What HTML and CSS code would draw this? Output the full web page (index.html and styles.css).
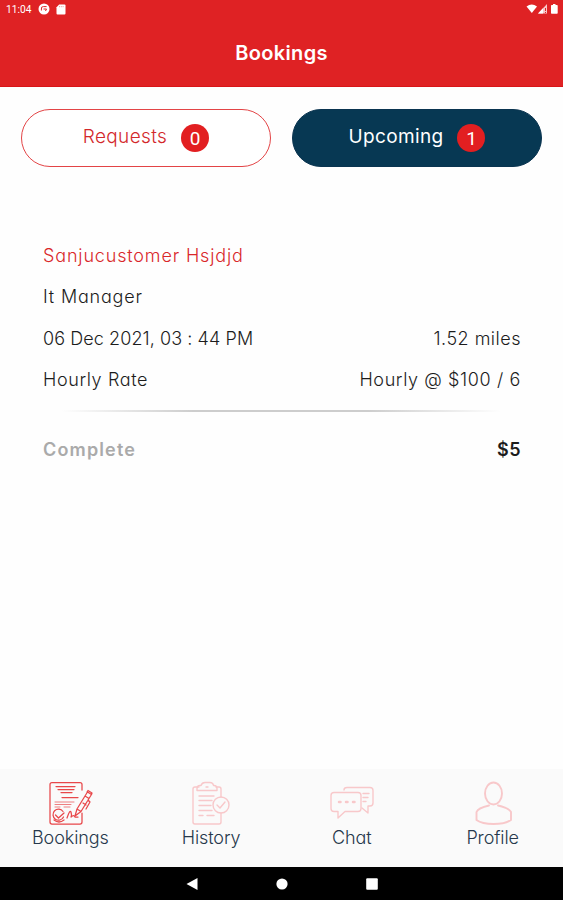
FILE: index.html
```html
<!DOCTYPE html>
<html lang="en">
<head>
    <meta charset="UTF-8">
    <meta name="viewport" content="width=device-width, initial-scale=1.0">
    <title>Bookings</title>
    <link rel="stylesheet" href="styles.css">
</head>
<body>
    <div class="app">
        <header class="header">
            <div class="status-bar">
                <span class="clock">11:04</span>
                <svg class="status-app" width="12" height="12" viewBox="0 0 12 12">
                    <circle cx="6" cy="6" r="5.5" fill="#fff"/>
                    <path d="M8.6 3.600H5.400A2 2 0 0 0 3.400 6v1.500M5.500 6h3l-1 2" fill="none" stroke="#df2224" stroke-width="1"/>
                </svg>
                <svg class="status-card" width="10" height="11" viewBox="0 0 10 11">
                    <path d="M3.2.5H8.500a1 1 0 0 1 1 1v8a1 1 0 0 1-1 1h-7a1 1 0 0 1-1-1V3.200z" fill="#fff"/>
                    <path d="M3.500 2v1.200M5.300 2v1.200M7.100 2v1.200" stroke="#df2224" stroke-width=".4"/>
                </svg>
                <svg class="status-icons" width="34" height="12" viewBox="0 0 34 12">
                    <path d="M.5 3.500Q5.800-.6 11 3.500L5.800 10z" fill="#fff"/>
                    <path d="M12 10.500 21 1v9.500z" fill="#fff" opacity=".75"/>
                    <path d="M12 10.500l5-5.300v5.300z" fill="#fff"/>
                    <path d="M19.500 5v3M19.500 9v1" stroke="#df2224" stroke-width="1"/>
                    <path d="M27 1h2.500v1H31a.7.7 0 0 1 .7.700v7.300a.7.7 0 0 1-.7.700h-5.300a.7.7 0 0 1-.7-.7V2.700a.7.7 0 0 1 .7-.7H27z" fill="#fff"/>
                </svg>
            </div>
            <h1>Bookings</h1>
        </header>

        <div class="tabs">
            <button class="tab"><span class="tab-label">Requests</span><span class="badge">0</span></button>
            <button class="tab active"><span class="tab-label">Upcoming</span><span class="badge">1</span></button>
        </div>

        <main class="booking">
            <div class="row"><span class="customer">Sanjucustomer Hsjdjd</span></div>
            <div class="row"><span class="job">It Manager</span></div>
            <div class="row"><span class="date">06 Dec 2021, 03 : 44 PM</span><span class="distance">1.52 miles</span></div>
            <div class="row"><span class="rate-label">Hourly Rate</span><span class="rate">Hourly @ $100 / 6</span></div>
            <div class="divider"></div>
            <div class="row total"><span class="status">Complete</span><span class="price">$5</span></div>
        </main>

        <nav class="bottom-nav">
            <a class="nav-item current">
                <svg width="46" height="46" viewBox="0 0 46 46">
                    <path d="M35 10V4.500Q35 2.500 33 2.500H5Q3 2.500 3 4.500V42Q3 44 5 44H33Q35 44 35 42V33"/>
                    <path d="M9 6.500H28M11 9.500H27M14 12.500H25M15 17.500H31"/>
                    <path d="M8 22H27M8 24.500H24M8 27H13M17 27H23" stroke-width=".7"/>
                    <path d="M16 31.500A5.500 5.500 0 1 0 16.500 37M7 40Q12 44 17 40M8.500 35l3 3 5.500-5"/>
                    <path d="M20 38Q23 29 24 32T24 37Q27 34 28 37H31"/>
                    <path d="M28 36l2-7 8-13 4 2.500-8 13zM38 16l2.500-4 4 2.500L42 18.500M30 29l4 2.500M36 23l3 2M41 20l2 2-4 7M40 12l1-1.500 4 2.500-.5 1.500"/>
                </svg>
                <span>Bookings</span>
            </a>
            <a class="nav-item">
                <svg width="46" height="46" viewBox="0 0 46 46">
                    <path d="M11 7H7Q5 7 5 9V42Q5 44 7 44H31Q33 44 33 42V33M33 17V9Q33 7 31 7H28"/>
                    <path d="M9 10.500V8.500Q9 5.500 12 5.500H13Q14 2.500 17 2.500H22Q25 2.500 25.500 5.500H26Q29 5.500 29 8.500V10.500zM18 7H20"/>
                    <path d="M11 16H26M11 20.500H24M11 25.500H23M11 30.500H24M11 35.500H15M19 35.500H26"/>
                    <circle cx="33" cy="25" r="8"/>
                    <path d="M29 25l3 3 5-6"/>
                </svg>
                <span>History</span>
            </a>
            <a class="nav-item">
                <svg width="46" height="46" viewBox="0 0 46 46">
                    <path d="M5 12.500H29Q32 12.500 32 15.500V28.500Q32 31.500 29 31.500H16L9 38V31.500H5Q2 31.500 2 28.500V15.500Q2 12.500 5 12.500z"/>
                    <path d="M15 10Q15 7.500 18 7.500H41Q44 7.500 44 10.500V23Q44 26 41 26H39V33L33 28"/>
                    <path d="M34 13.500H40M34 17.500H39M34 21.500H37"/>
                    <path d="M10 22H11.500M17 22H18.500M24 22H25.500" stroke-width="2.500"/>
                </svg>
                <span>Chat</span>
            </a>
            <a class="nav-item">
                <svg width="46" height="46" viewBox="0 0 46 46" class="profile-icon">
                    <ellipse cx="23.500" cy="13.500" rx="8.500" ry="11"/>
                    <path d="M19 25.500Q8 28 6.500 32V40Q12 44 23.500 44T41 40V32Q39 28 28 25.500"/>
                </svg>
                <span>Profile</span>
            </a>
        </nav>

        <footer class="system-nav">
            <svg width="12" height="14" viewBox="0 0 12 14"><path d="M.5 7 11.500 1v12z"/></svg>
            <svg width="12" height="14" viewBox="0 0 12 14"><circle cx="6" cy="7" r="5.600"/></svg>
            <svg width="12" height="14" viewBox="0 0 12 14"><rect x=".2" y="1.200" width="11.600" height="11.600" rx="1"/></svg>
        </footer>
    </div>
</body>
</html>
```

FILE: styles.css
```css
* {
    box-sizing: border-box;
}
body {
    margin: 0;
    font-family: 'Inter', 'Liberation Sans', sans-serif;
    font-feature-settings: "cv11";
    font-size: 18px;
    font-weight: 300;
    color: #1c1c1c;
    background: #fefefe;
}
.app {
    display: flex;
    flex-direction: column;
    height: 900px;
}
.header {
    height: 87px;
    background: #df2224;
    border-bottom: 1px solid #d81518;
    color: #fff;
}
.status-bar {
    display: flex;
    align-items: center;
    height: 18px;
    padding: 0 3px 0 6px;
}
.clock {
    width: 32px;
    font-family: 'Roboto', sans-serif;
    font-size: 10.200px;
    font-weight: 400;
}
.status-card {
    margin-left: 6px;
}
.status-icons {
    margin-left: auto;
}
h1 {
    margin: 0;
    padding-top: 20px;
    font-size: 20px;
    line-height: 30px;
    font-weight: 600;
    letter-spacing: 0.350px;
    text-align: center;
}
.tabs {
    display: flex;
    gap: 21px;
    padding: 22px 21px 0;
}
.tab {
    display: flex;
    flex: 1;
    align-items: center;
    justify-content: center;
    gap: 14px;
    height: 58px;
    padding: 0;
    border: 1px solid #e34446;
    border-radius: 29px;
    background: #fff;
    color: #d3282b;
    font: inherit;
    font-size: 19px;
}
.tab-label {
    padding-bottom: 3px;
    letter-spacing: 0.350px;
}
.tab.active {
    border-color: #0a3450;
    background: #073853;
    color: #fff;
    font-weight: 400;
}
.badge {
    width: 28px;
    height: 28px;
    border-radius: 50%;
    background: #e21f21;
    color: #fff;
    font-family: 'Roboto', sans-serif;
    font-size: 19px;
    font-weight: 400;
    line-height: 29px;
    text-align: center;
}
.booking {
    flex: 1;
    padding: 67.500px 42px 0 43px;
}
.row {
    display: flex;
    justify-content: space-between;
    height: 41.500px;
    line-height: 41.500px;
    white-space: nowrap;
}
.customer {
    color: #d9272a;
    letter-spacing: 0.840px;
}
.job {
    letter-spacing: 0.800px;
}
.date {
    letter-spacing: 0.080px;
}
.distance {
    letter-spacing: 0.500px;
}
.rate-label,
.rate {
    letter-spacing: 0.620px;
}
.divider {
    height: 2px;
    margin: 9.500px 20px 0 18px;
    background: linear-gradient(to right, transparent, #cdcdcd 30%, #cdcdcd 70%, transparent);
}
.total {
    padding-top: 17px;
    font-weight: 600;
}
.status {
    color: #aaa;
    letter-spacing: 1.150px;
}
.price {
    letter-spacing: 0.500px;
}
.bottom-nav {
    display: flex;
    height: 98px;
    background: #fafafa;
}
.nav-item {
    display: flex;
    flex: 1;
    flex-direction: column;
    align-items: center;
    gap: 2px;
    padding-top: 11px;
    color: #26384b;
    line-height: 20px;
    letter-spacing: -0.100px;
}
.nav-item svg {
    fill: none;
    stroke: #f8c8ca;
    stroke-width: 1.400;
    stroke-linecap: round;
    stroke-linejoin: round;
}
.nav-item .profile-icon {
    stroke-width: 1.900;
}
.nav-item.current svg {
    stroke: #e8474a;
    stroke-width: 1.250;
}
.system-nav {
    display: flex;
    align-items: center;
    justify-content: center;
    gap: 78px;
    height: 33px;
    background: #000;
    fill: #fff;
}
```
